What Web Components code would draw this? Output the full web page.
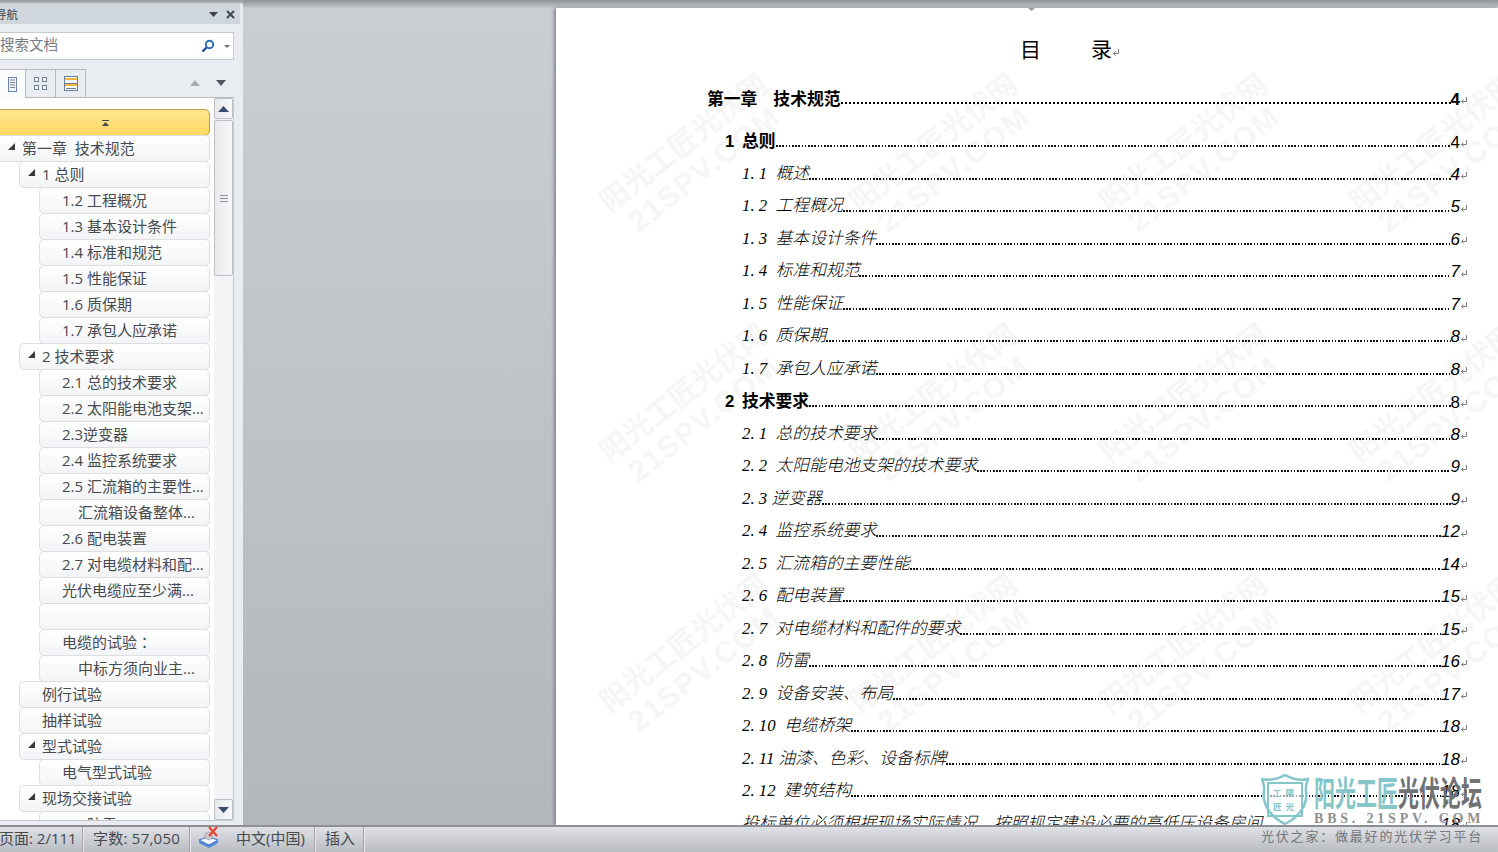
<!DOCTYPE html>
<html>
<head>
<meta charset="utf-8">
<title>目录</title>
<style>
    html, body{
        margin: 0;
        height: 100%;
        overflow: hidden;
    }
</style>
</head>
<body>
<word-app>
    <nav-pane slot="nav">
        <nav-collapse></nav-collapse>
        <nav-item level="0" expand>第一章  技术规范</nav-item>
        <nav-item level="1" expand>1 总则</nav-item>
        <nav-item level="2">1.2 工程概况</nav-item>
        <nav-item level="2">1.3 基本设计条件</nav-item>
        <nav-item level="2">1.4 标准和规范</nav-item>
        <nav-item level="2">1.5 性能保证</nav-item>
        <nav-item level="2">1.6 质保期</nav-item>
        <nav-item level="2">1.7 承包人应承诺</nav-item>
        <nav-item level="1" expand>2 技术要求</nav-item>
        <nav-item level="2">2.1 总的技术要求</nav-item>
        <nav-item level="2">2.2 太阳能电池支架...</nav-item>
        <nav-item level="2">2.3逆变器</nav-item>
        <nav-item level="2">2.4 监控系统要求</nav-item>
        <nav-item level="2">2.5 汇流箱的主要性...</nav-item>
        <nav-item level="3">汇流箱设备整体...</nav-item>
        <nav-item level="2">2.6 配电装置</nav-item>
        <nav-item level="2">2.7 对电缆材料和配...</nav-item>
        <nav-item level="2">光伏电缆应至少满...</nav-item>
        <nav-item level="2"></nav-item>
        <nav-item level="2">电缆的试验<span style="font-family:'Noto Sans CJK TC'">：</span></nav-item>
        <nav-item level="3">中标方须向业主...</nav-item>
        <nav-item level="1">例行试验</nav-item>
        <nav-item level="1">抽样试验</nav-item>
        <nav-item level="1" expand>型式试验</nav-item>
        <nav-item level="2">电气型式试验</nav-item>
        <nav-item level="1" expand>现场交接试验</nav-item>
        <nav-item level="2">2.8 防雷</nav-item>
    </nav-pane>
    <doc-page slot="doc">
        <toc-row level="1" page="4">第一章<span style="display:inline-block;width:16px"></span>技术规范</toc-row>
        <toc-row level="2" page="4" num="1">总则</toc-row>
        <toc-row level="3" page="4">1. 1  概述</toc-row>
        <toc-row level="3" page="5">1. 2  工程概况</toc-row>
        <toc-row level="3" page="6">1. 3  基本设计条件</toc-row>
        <toc-row level="3" page="7">1. 4  标准和规范</toc-row>
        <toc-row level="3" page="7">1. 5  性能保证</toc-row>
        <toc-row level="3" page="8">1. 6  质保期</toc-row>
        <toc-row level="3" page="8">1. 7  承包人应承诺</toc-row>
        <toc-row level="2" page="8" num="2">技术要求</toc-row>
        <toc-row level="3" page="8">2. 1  总的技术要求</toc-row>
        <toc-row level="3" page="9">2. 2  太阳能电池支架的技术要求</toc-row>
        <toc-row level="3" page="9">2. 3 逆变器</toc-row>
        <toc-row level="3" page="12">2. 4  监控系统要求</toc-row>
        <toc-row level="3" page="14">2. 5  汇流箱的主要性能</toc-row>
        <toc-row level="3" page="15">2. 6  配电装置</toc-row>
        <toc-row level="3" page="15">2. 7  对电缆材料和配件的要求</toc-row>
        <toc-row level="3" page="16">2. 8  防雷</toc-row>
        <toc-row level="3" page="17">2. 9  设备安装、布局</toc-row>
        <toc-row level="3" page="18">2. 10  电缆桥架</toc-row>
        <toc-row level="3" page="18">2. 11 油漆、色彩、设备标牌</toc-row>
        <toc-row level="3" page="18">2. 12  建筑结构</toc-row>
        <toc-row level="3" page="18">投标单位必须根据现场实际情况，按照规定建设必要的高低压设备房间。</toc-row>
    </doc-page>
    <status-bar slot="status"></status-bar>
    <logo-mark slot="logo"></logo-mark>
</word-app>

<script>
const RETURN_MARK = `<svg width="8" height="9" viewBox="0 0 8 9"><path d="M6.500 1v4.500H1.500M3.500 3.500l-2 2 2 2" fill="none" stroke="#808080" stroke-width="1"/></svg>`;

class WordApp extends HTMLElement{
    constructor(){
        super();
        this.attachShadow({ mode: "open" });
        this.shadowRoot.innerHTML = `
<style>
    :host{
        display: grid;
        grid-template-rows: 825px 27px;
        grid-template-columns: 243px 1fr;
        height: 852px;
        width: 1498px;
        position: relative;
        overflow: hidden;
        background: #c4c7cc;
    }
    .status{
        grid-column: 1 / 3;
    }
    .doc{
        display: block;
        min-width: 0;
        overflow: hidden;
        padding: 8px 0 0 313px;
        background:
            linear-gradient(#8f9296, #bcbfc4 7px, transparent 8px),
            linear-gradient(#cbcfd4, #b3b6ba);
    }
    .logo{
        position: absolute;
        left: 1261px;
        top: 774px;
    }
</style>
<div><slot name="nav"></slot></div>
<div class="doc"><slot name="doc"></slot></div>
<div class="status"><slot name="status"></slot></div>
<div class="logo"><slot name="logo"></slot></div>
`;
    }
}
customElements.define("word-app", WordApp);

class NavPane extends HTMLElement{
    constructor(){
        super();
        this.attachShadow({ mode: "open" });
        this.shadowRoot.innerHTML = `
<style>
    :host{
        display: flex;
        flex-direction: column;
        height: 825px;
        box-sizing: border-box;
        padding-top: 4px;
        background: linear-gradient(#94979b, #b5b8bc 3px, #e9ecf1 4px);
        font-family: "Open Sans", "Noto Sans CJK SC", sans-serif;
        overflow: hidden;
    }
    #title{
        flex: none;
        display: flex;
        align-items: center;
        width: 240px;
        height: 20px;
        background: #d0d6de;
        font-size: 11.500px;
        color: #3c4148;
    }
    #title span{
        margin-left: -5px;
        flex: 1;
    }
    #title svg{
        margin-right: 8px;
    }
    #search{
        flex: none;
        display: flex;
        align-items: center;
        box-sizing: border-box;
        width: 234px;
        height: 28px;
        margin-top: 8px;
        background: #fff;
        border: 1px solid #c6cacf;
        border-left: none;
        font-size: 14.500px;
        color: #767c84;
    }
    #search span{
        flex: 1;
        padding-bottom: 5px;
    }
    #search .glass{
        margin-right: 9px;
    }
    #search .drop{
        margin-right: 3px;
    }
    #tabs{
        flex: none;
        display: flex;
        width: 234px;
        height: 29px;
        margin-top: 9px;
    }
    .tab{
        box-sizing: border-box;
        display: flex;
        align-items: center;
        justify-content: center;
        width: 30px;
        border: 1px solid #b7bbc0;
        border-left: none;
    }
    .tab.on{
        width: 26px;
        background: #fbfcfc;
        border-bottom: none;
    }
    #arrows{
        flex: 1;
        display: flex;
        align-items: center;
        justify-content: flex-end;
        gap: 16px;
        padding-right: 8px;
        border-bottom: 1px solid #b7bbc0;
    }
    #list{
        flex: none;
        display: flex;
        width: 234px;
        height: 723px;
        box-sizing: border-box;
        background: #fff;
        border-right: 1px solid #c6cacf;
        border-bottom: 1px solid #c6cacf;
    }
    #tree{
        flex: 1;
        min-width: 0;
        overflow: hidden;
        padding: 11px 4px 0 0;
    }
</style>
<div id="title">
    <span>导航</span>
    <svg width="9" height="5" viewBox="0 0 9 5"><path d="M0 0h9L4.500 5z" fill="#3c3f44"/></svg>
    <svg width="9" height="9" viewBox="0 0 9 9" style="margin-right:5px"><path d="M1 1l7 7M8 1L1 8" stroke="#44484e" stroke-width="2"/></svg>
</div>
<div id="search">
    <span>搜索文档</span>
    <svg class="glass" width="14" height="14" viewBox="0 0 14 14"><circle cx="8.500" cy="5.500" r="3.700" fill="#fff" stroke="#2f6db5" stroke-width="2"/><path d="M5.500 8.500L1.500 12.500" stroke="#1f4f96" stroke-width="2.400"/></svg>
    <svg class="drop" width="6" height="3" viewBox="0 0 6 3"><path d="M0 0h6L3 3z" fill="#6a6e74"/></svg>
</div>
<div id="tabs">
    <div class="tab on">
        <svg width="9" height="15" viewBox="0 0 9 15"><rect x=".5" y=".5" width="8" height="14" fill="#eef3f9" stroke="#6a86a8"/><path d="M2 3h5M2 5.500h5M2 8h5M2 10.500h5" stroke="#7a8796"/></svg>
    </div>
    <div class="tab">
        <svg width="13" height="13" viewBox="0 0 13 13"><g fill="#f3f6fa" stroke="#6a7f9c"><rect x=".5" y=".5" width="4" height="4"/><rect x="8.500" y=".5" width="4" height="4"/><rect x=".5" y="8.500" width="4" height="4"/><rect x="8.500" y="8.500" width="4" height="4"/></g></svg>
    </div>
    <div class="tab">
        <svg width="14" height="15" viewBox="0 0 14 15"><rect x=".5" y=".5" width="13" height="14" fill="#f3f6fa" stroke="#6a7f9c"/><rect x="1" y="2" width="12" height="2" fill="#f0b93c"/><rect x="1" y="7" width="12" height="1" fill="#6a7f9c"/><rect x="1" y="8" width="12" height="2" fill="#f0b93c"/><path d="M2 12.500h10" stroke="#6a7f9c"/></svg>
    </div>
    <div id="arrows">
        <svg width="10" height="6" viewBox="0 0 10 6"><path d="M0 6h10L5 0z" fill="#a9adb2"/></svg>
        <svg width="10" height="6" viewBox="0 0 10 6"><path d="M0 0h10L5 6z" fill="#54585e"/></svg>
    </div>
</div>
<div id="list">
    <div id="tree"><slot></slot></div>
    <nav-scroll></nav-scroll>
</div>
`;
    }
}
customElements.define("nav-pane", NavPane);

class NavCollapse extends HTMLElement{
    constructor(){
        super();
        this.attachShadow({ mode: "open" });
        this.shadowRoot.innerHTML = `
<style>
    :host{
        display: flex;
        align-items: center;
        justify-content: center;
        box-sizing: border-box;
        height: 27px;
        margin-left: -6px;
        padding-left: 6px;
        border: 1px solid #c29b45;
        border-radius: 5px;
        background: linear-gradient(#ffe68f, #ffd763);
    }
</style>
<svg width="7" height="6" viewBox="0 0 7 6"><path d="M0 .5h7" stroke="#4a4a48"/><path d="M0 6h7L3.500 2z" fill="#4a4a48"/></svg>
`;
    }
}
customElements.define("nav-collapse", NavCollapse);

class NavItem extends HTMLElement{
    constructor(){
        super();
        this.attachShadow({ mode: "open" });
        this.shadowRoot.innerHTML = `
<style>
    :host{
        display: flex;
        align-items: center;
        box-sizing: border-box;
        height: 27px;
        margin-top: -1px;
        gap: 7px;
        border: 1px solid #dcdee1;
        border-radius: 5px;
        background: linear-gradient(#fff, #f3f4f6);
        font-size: 15px;
        color: #474a4f;
        white-space: pre;
        overflow: hidden;
    }
    :host([level="0"]){
        margin-left: -6px;
        padding-left: 13px;
    }
    :host([level="1"]){
        margin-left: 19px;
        padding-left: 8px;
    }
    :host([level="2"]){
        margin-left: 39px;
        padding-left: 8px;
    }
    :host([level="3"]){
        margin-left: 39px;
        padding-left: 24px;
    }
    #label{
        padding-bottom: 2px;
    }
    svg{
        flex: none;
        margin-top: -5px;
        visibility: hidden;
    }
    :host([expand]) svg{
        visibility: visible;
    }
</style>
<svg width="7" height="7" viewBox="0 0 7 7"><path d="M0 7h7V0z" fill="#3a3a3a"/></svg>
<span id="label"><slot></slot></span>
`;
    }
}
customElements.define("nav-item", NavItem);

class NavScroll extends HTMLElement{
    constructor(){
        super();
        this.attachShadow({ mode: "open" });
        this.shadowRoot.innerHTML = `
<style>
    :host{
        flex: none;
        display: flex;
        flex-direction: column;
        width: 19px;
        background: #f3f4f6;
    }
    .btn, #thumb{
        box-sizing: border-box;
        display: flex;
        align-items: center;
        justify-content: center;
        border: 1px solid #bcc0c5;
        border-radius: 2px;
        background: linear-gradient(90deg, #e9eaec, #f7f8f9);
    }
    .btn{
        height: 21px;
    }
    #thumb{
        height: 156px;
        margin-top: 1px;
    }
    #rest{
        flex: 1;
    }
</style>
<div class="btn"><svg width="11" height="6" viewBox="0 0 11 6"><path d="M0 6h11L5.500 0z" fill="#3f4a70"/></svg></div>
<div id="thumb"><svg width="8" height="7" viewBox="0 0 8 7"><path d="M0 .5h8M0 3.500h8M0 6.500h8" stroke="#8f9297"/></svg></div>
<div id="rest"></div>
<div class="btn"><svg width="11" height="6" viewBox="0 0 11 6"><path d="M0 0h11L5.500 6z" fill="#3f4a70"/></svg></div>
`;
    }
}
customElements.define("nav-scroll", NavScroll);

class DocPage extends HTMLElement{
    constructor(){
        super();
        this.attachShadow({ mode: "open" });
        let marks = "";
        for (let i = 0; i < 16; i++) {
            marks += `<div class="mark"><div>阳光工匠光伏网<br><b>21SPV.COM</b></div></div>`;
        }
        this.shadowRoot.innerHTML = `
<style>
    :host{
        display: block;
        position: relative;
        height: 817px;
        background: #fff;
        box-shadow: -2px 0 3px #85888c;
        font-family: "Liberation Serif", "Noto Sans CJK SC", serif;
        color: #000;
    }
    #clip{
        position: relative;
        height: 817px;
        overflow: hidden;
    }
    #marks{
        position: absolute;
        left: 12px;
        top: 21px;
        display: grid;
        grid-template-columns: repeat(4, 250px);
        grid-auto-rows: 250px;
    }
    .mark{
        display: flex;
        align-items: center;
        justify-content: center;
        white-space: nowrap;
    }
    .mark div{
        transform: rotate(-38deg);
        font: 700 29px/33px "Noto Sans CJK SC", sans-serif;
        color: #f6f6f6;
        text-align: center;
    }
    .mark b{
        font: 700 30px/30px "Liberation Sans", sans-serif;
        letter-spacing: 1.500px;
    }
    #top{
        position: absolute;
        left: 472px;
        top: 0;
    }
    #body{
        position: relative;
        padding: 24px 30px 0 151px;
    }
    #title{
        display: flex;
        align-items: center;
        gap: 50px;
        height: 32px;
        margin: 0 0 16px 313px;
        font: 21px/32px "Noto Sans CJK SC", sans-serif;
    }
    #title svg{
        margin: 8px 0 0 -50px;
    }
</style>
<div id="clip">
    <div id="marks">${marks}</div>
    <svg id="top" width="7" height="3" viewBox="0 0 7 3"><path d="M0 0h7L3.500 3z" fill="#9a9a9a"/></svg>
    <div id="body">
        <div id="title"><span>目</span><span>录</span>${RETURN_MARK}</div>
        <slot></slot>
    </div>
</div>
`;
    }
}
customElements.define("doc-page", DocPage);

class TocRow extends HTMLElement{
    constructor(){
        super();
        this.attachShadow({ mode: "open" });
    }
    connectedCallback(){
        const num = this.getAttribute("num");
        const page = this.getAttribute("page");
        this.shadowRoot.innerHTML = `
<style>
    :host{
        display: flex;
        align-items: center;
        height: 32.500px;
        font-size: 16.800px;
        white-space: pre;
    }
    :host([level="1"]){
        margin-bottom: 10.500px;
        font-weight: 700;
    }
    :host([level="2"]){
        padding-left: 18px;
        font-weight: 700;
    }
    :host([level="3"]){
        padding-left: 35px;
        font-style: italic;
        font-weight: 300;
    }
    :host([level="1"]) #text{
        padding-top: 3px;
    }
    :host([level="2"]) #text{
        padding-top: 2px;
    }
    #num{
        display: inline-block;
        width: 17px;
        font-family: "Liberation Sans", sans-serif;
    }
    #text{
        font-family: "Liberation Serif", "Noto Sans CJK SC", serif;
    }
    #lead{
        flex: 1;
        height: 2px;
        margin-top: 14px;
        background: repeating-linear-gradient(90deg, #111 0 1.600px, transparent 1.600px 3.200px);
    }
    :host([level="1"]) #lead{
        background: repeating-linear-gradient(90deg, #000 0 2px, transparent 2px 4px);
    }
    #page{
        margin-top: 8px;
        font: 17px "Liberation Sans", sans-serif;
    }
    :host([level="1"]) #page{
        font-weight: 700;
    }
    :host([level="3"]) #page{
        margin-top: 6px;
        font-style: italic;
    }
    svg{
        flex: none;
        margin-top: 8px;
    }
</style>
<span id="text">${num ? `<span id="num">${num}</span>` : ""}<slot></slot></span>
<div id="lead"></div>
<span id="page">${page}</span>
${RETURN_MARK}
`;
    }
}
customElements.define("toc-row", TocRow);

class StatusBar extends HTMLElement{
    constructor(){
        super();
        this.attachShadow({ mode: "open" });
        this.shadowRoot.innerHTML = `
<style>
    :host{
        display: flex;
        box-sizing: border-box;
        height: 27px;
        border-top: 2px solid #8c9095;
        background: linear-gradient(#dfe1e5, #b9bcc1);
        font: 15px "Open Sans", "Noto Sans CJK SC", sans-serif;
        color: #45484d;
    }
    .cell{
        box-sizing: border-box;
        display: flex;
        align-items: center;
        padding-bottom: 4px;
        border-right: 1px solid #9ea1a6;
        box-shadow: 1px 0 0 #e9ebee;
    }
    #lang{
        gap: 16px;
        width: 125px;
        padding-left: 8px;
        padding-bottom: 0;
    }
    #lang span{
        padding-bottom: 4px;
    }
    #ins{
        width: 49px;
        padding-left: 10px;
    }
    #page{
        width: 84px;
        margin-left: -1px;
    }
    #words{
        width: 107px;
        padding-left: 10px;
        letter-spacing: .25px;
    }
</style>
<div class="cell" id="page">页面: 2/111</div>
<div class="cell" id="words">字数: 57,050</div>
<div class="cell" id="lang">
    <svg width="22" height="23" viewBox="0 0 22 23" style="margin-top:-4px"><path d="M1 14l9-3 10 3-9 5z" fill="#f4f7fb" stroke="#3f74c4"/><path d="M1 14v3l10 5 9-5v-3l-9 5z" fill="#4f8ad8"/><path d="M7 12V8l4-2 3 3v3l-3 2z" fill="#c9ccd2" stroke="#7f8389" stroke-width=".6"/><path d="M11 1l8 9M19 1l-8 9" stroke="#e8432e" stroke-width="2.200"/></svg>
    <span>中文(中国)</span>
</div>
<div class="cell" id="ins">插入</div>
`;
    }
}
customElements.define("status-bar", StatusBar);

class LogoMark extends HTMLElement{
    constructor(){
        super();
        this.attachShadow({ mode: "open" });
        this.shadowRoot.innerHTML = `
<style>
    :host{
        display: grid;
        grid-template-columns: 53px auto;
        width: 224px;
    }
    #words{
        display: flex;
        height: 37px;
        align-items: center;
        font: 700 21px/21px "Noto Sans CJK SC", sans-serif;
        transform: scaleY(1.600);
    }
    .teal{
        color: #84c6ca;
    }
    .gray{
        color: #707274;
    }
    #bbs{
        height: 10px;
        font: 700 14px/10px "Liberation Serif", serif;
        letter-spacing: 3.800px;
        color: #8d8f91;
        white-space: pre;
    }
    #shield{
        grid-row: 1 / 3;
    }
    #slogan{
        grid-column: 1 / 3;
        margin-top: 1px;
        font: 13px/18px "Noto Sans CJK SC", sans-serif;
        letter-spacing: 1.800px;
        color: #76787b;
        white-space: nowrap;
    }
    text{
        font: 700 8.500px "Noto Sans CJK SC", sans-serif;
        letter-spacing: 4px;
        fill: #84c6ca;
    }
</style>
<svg id="shield" width="48" height="52" viewBox="0 0 48 52">
    <path d="M1 5c8 2 16 0 23-4 7 4 15 6 23 4-1 4-3 7-2 12 2 14-7 26-21 33C10 43 1 31 3 17 4 12 2 9 1 5z" fill="#fff" fill-opacity=".6" stroke="#84c6ca" stroke-width="2.500"/>
    <rect x="7" y="9" width="34" height="33" fill="none" stroke="#84c6ca" stroke-width="2"/>
    <text x="12" y="22">工陽</text>
    <text x="12" y="36">匠光</text>
</svg>
<div id="words"><span class="teal">阳光工匠</span><span class="gray">光伏论坛</span></div>
<div id="bbs">BBS. 21SPV. COM</div>
<div id="slogan">光伏之家：做最好的光伏学习平台</div>
`;
    }
}
customElements.define("logo-mark", LogoMark);
</script>
</body>
</html>
